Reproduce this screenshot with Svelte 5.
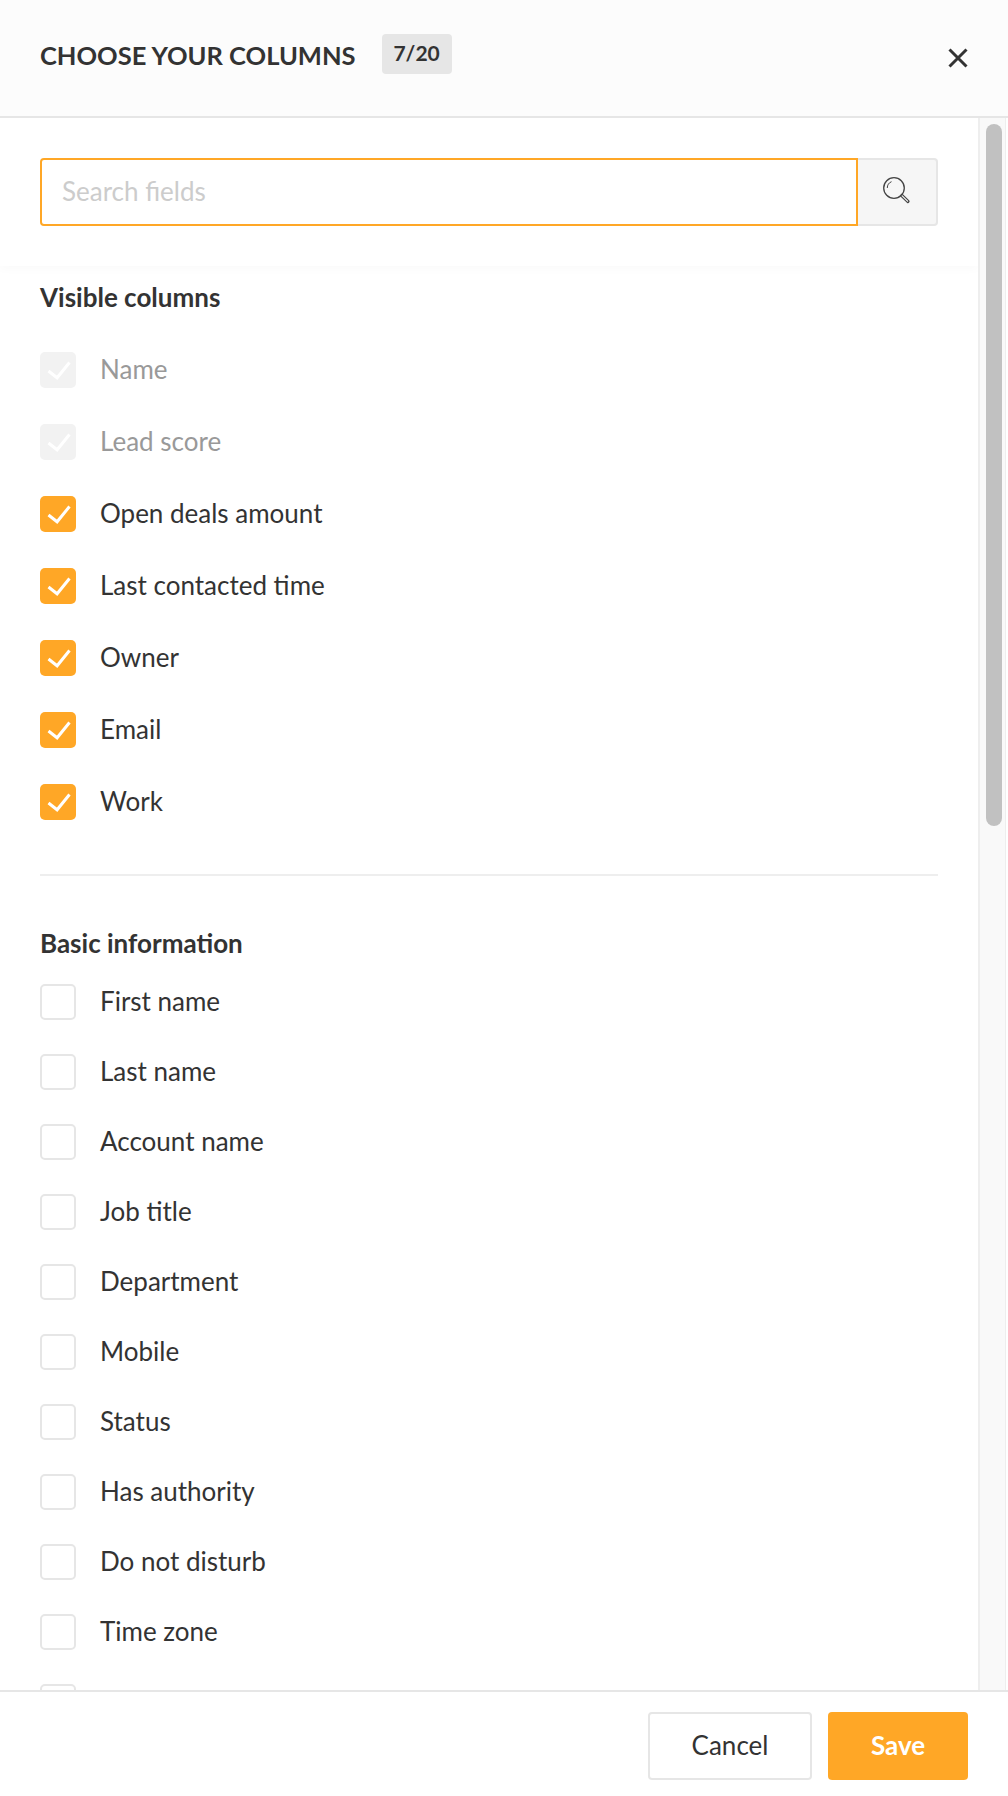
<script lang="ts">
  const visible = [
    { label: 'Name', locked: true },
    { label: 'Lead score', locked: true },
    { label: 'Open deals amount', locked: false },
    { label: 'Last contacted time', locked: false },
    { label: 'Owner', locked: false },
    { label: 'Email', locked: false },
    { label: 'Work', locked: false }
  ];
  // last entry is scrolled mostly out of view, only the top of its box shows
  const basic = [
    'First name',
    'Last name',
    'Account name',
    'Job title',
    'Department',
    'Mobile',
    'Status',
    'Has authority',
    'Do not disturb',
    'Time zone',
    ''
  ];
</script>

<div class="modal">
  <header class="head">
    <h1>CHOOSE YOUR COLUMNS</h1>
    <span class="count">7/20</span>
    <button class="close" aria-label="Close">
      <svg width="20" height="20" viewBox="0 0 20 20"><path d="M1.5 1.5l17 17M18.5 1.500l-17 17" fill="none" stroke="#333" stroke-width="3" /></svg>
    </button>
  </header>

  <div class="main">
    <div class="scroll">
      <div class="search">
        <input placeholder="Search fields" />
        <button class="search-btn" aria-label="Search">
          <svg width="28" height="28" viewBox="0 0 28 28" fill="none" stroke="#444">
            <circle cx="11" cy="12" r="10.300" stroke-width="1.300" />
            <path d="M4.300 12a6.800 6.800 0 0 1 4.200-6.300" stroke-width="1" />
            <path d="M18.800 19.500l6.200 6" stroke-width="3.200" stroke-linecap="round" />
            <path d="M19.200 19.900l5.400 5.200" stroke="#f6f6f6" stroke-width="1.200" stroke-linecap="round" />
          </svg>
        </button>
      </div>

      <section class="visible">
        <h2>Visible columns</h2>
        {#each visible as item}
          <div class="row tall" class:locked={item.locked}>
            <span class="box on">
              <svg width="26" height="26" viewBox="0 0 26 26"><path d="M3.500 14l8.600 6.800L24.500 5.500" fill="none" stroke="#fff" stroke-width="3" /></svg>
            </span>
            <span class="label">{item.label}</span>
          </div>
        {/each}
      </section>

      <section class="basic">
        <h2>Basic information</h2>
        {#each basic as label}
          <div class="row">
            <span class="box"></span>
            {#if label}<span class="label">{label}</span>{/if}
          </div>
        {/each}
      </section>
    </div>
    <div class="track"><div class="thumb"></div></div>
  </div>

  <footer class="foot">
    <button class="btn">Cancel</button>
    <button class="btn primary">Save</button>
  </footer>
</div>

<style>
  :global(body) {
    background: #fff;
  }

  .modal {
    width: 1008px;
    height: 1796px;
    display: flex;
    flex-direction: column;
    font-family: Lato, "Liberation Sans", sans-serif;
    color: #333;
    overflow: hidden;
  }

  .head {
    flex: none;
    height: 116px;
    box-sizing: content-box;
    display: flex;
    align-items: flex-start;
    padding-left: 40px;
    background: #fcfcfc;
    border-bottom: 2px solid #e6e6e6;
  }

  h1 {
    margin: 38px 0 0;
    font-size: 25.500px;
    line-height: 35px;
    font-weight: 700;
    color: #333;
  }

  .count {
    margin: 34px 0 0 26px;
    width: 70px;
    height: 40px;
    border-radius: 4px;
    background: #e6e6e6;
    font-size: 21px;
    font-weight: 700;
    line-height: 38px;
    text-align: center;
  }

  .close {
    margin: 48px 40px 0 auto;
    padding: 0;
    border: 0;
    background: none;
    width: 20px;
    height: 20px;
  }

  .main {
    flex: 1;
    min-height: 0;
    display: flex;
  }

  .scroll {
    flex: 1;
    min-width: 0;
    overflow: hidden;
  }

  .search {
    display: flex;
    height: 68px;
    padding: 40px 40px;
    box-shadow: 0 4px 8px rgba(0, 0, 0, 0.02);
  }

  input {
    flex: 1;
    min-width: 0;
    box-sizing: border-box;
    border: 2px solid #ffa726;
    border-radius: 4px 0 0 4px;
    padding: 0 20px 3px;
    font: 26px Lato, sans-serif;
    outline: none;
  }

  input::placeholder {
    color: #ccc;
  }

  .search-btn {
    width: 80px;
    box-sizing: border-box;
    border: 2px solid #e6e6e6;
    border-left: 0;
    border-radius: 0 4px 4px 0;
    background: #f6f6f6;
    display: flex;
    align-items: center;
    justify-content: center;
    padding: 0 0 4px;
  }

  h2 {
    margin: 0;
    font-size: 26px;
    font-weight: 700;
    line-height: 30px;
  }

  .visible {
    margin: 0 40px;
    padding: 16px 0 36px;
    border-bottom: 2px solid #eee;
  }

  .visible h2 {
    margin-bottom: 22px;
  }

  .basic {
    margin: 0 40px;
    padding-top: 52px;
  }

  .basic h2 {
    margin-bottom: 9px;
  }

  .row {
    height: 70px;
    display: flex;
    align-items: center;
    gap: 24px;
    font-size: 26px;
  }

  .row.tall {
    height: 72px;
  }

  .label {
    padding-bottom: 2px;
  }

  .locked {
    color: #999;
  }

  .box {
    flex: none;
    width: 36px;
    height: 36px;
    box-sizing: border-box;
    border: 2px solid #e6e6e6;
    border-radius: 5px;
    display: flex;
    align-items: center;
    justify-content: center;
  }

  .box.on {
    border: 0;
    background: #ffa726;
  }

  .locked .box.on {
    background: #f2f2f2;
  }

  .track {
    flex: none;
    width: 28px;
    margin-right: 2px;
    box-sizing: border-box;
    padding: 6px 3px 0 6px;
    background: #f9f9f9;
    border-left: 2px solid #eee;
    border-right: 1px solid #eee;
  }

  .thumb {
    height: 702px;
    border-radius: 8px;
    background: #c1c1c1;
  }

  .foot {
    flex: none;
    height: 106px;
    box-sizing: border-box;
    display: flex;
    justify-content: flex-end;
    align-items: flex-start;
    gap: 16px;
    padding: 20px 40px 0 0;
    border-top: 2px solid #e6e6e6;
    background: #fff;
  }

  .btn {
    width: 164px;
    height: 68px;
    box-sizing: border-box;
    border: 2px solid #e6e6e6;
    border-radius: 4px;
    background: #fff;
    color: #333;
    font: 26px Lato, sans-serif;
    padding: 0 0 2px;
  }

  .btn.primary {
    width: 140px;
    border: 0;
    background: #ffa726;
    color: #fff;
    font-weight: 700;
  }
</style>
